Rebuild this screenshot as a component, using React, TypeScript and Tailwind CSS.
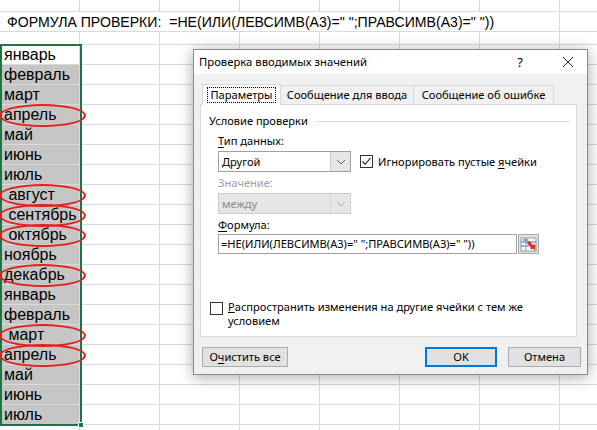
import React from "react";

const months = [
  "январь",
  "февраль",
  "март",
  "апрель ",
  "май",
  "июнь",
  "июль",
  " август",
  " сентябрь",
  " октябрь",
  "ноябрь",
  "декабрь ",
  "январь",
  "февраль",
  " март",
  "апрель ",
  "май",
  "июнь",
  "июль",
];

const circled = [3, 7, 8, 9, 11, 14, 15];

function EmptyCells({ h, from = 1 }: { h: string; from?: number }) {
  const cells = [];
  for (let i = from; i < 8; i++) {
    cells.push(
      <div key={i} className={`shrink-0 w-[80px] ${h} border-r border-b border-[#dadada]`} />
    );
  }
  return <>{cells}</>;
}

function Chevron({ color }: { color: string }) {
  return (
    <svg width="10" height="6" viewBox="0 0 10 6">
      <path d="M1 1 L5 5 L9 1" fill="none" stroke={color} strokeWidth="1" />
    </svg>
  );
}

function RangeIcon() {
  return (
    <svg width="17" height="15" viewBox="0 0 17 15">
      <rect x="1" y="1" width="15" height="13" fill="#f4f7fb" stroke="#8aa0b8" strokeWidth="1" />
      <line x1="1" y1="5" x2="16" y2="5" stroke="#4a78b0" strokeWidth="1" />
      <line x1="1" y1="9" x2="16" y2="9" stroke="#4a78b0" strokeWidth="1" />
      <line x1="6" y1="1" x2="6" y2="14" stroke="#8aa0b8" strokeWidth="1" />
      <line x1="3" y1="3" x2="8" y2="3" stroke="#3a6aa8" strokeWidth="1" />
      <path d="M8 5 L14 11 L14 7.5 M14 11 L10.5 11" fill="none" stroke="#e0301e" strokeWidth="2" />
      <path d="M8 5 L13 10" stroke="#e0301e" strokeWidth="3" />
    </svg>
  );
}

export default function App() {
  return (
    <div
      className="relative w-[597px] h-[430px] overflow-hidden bg-white text-black"
      style={{ fontFamily: '"Liberation Sans", Arial, sans-serif' }}
    >
      {/* Spreadsheet grid */}
      <div className="flex flex-col">
        <div className="flex">
          <EmptyCells h="h-[12px]" from={0} />
        </div>
        <div className="flex">
          <div className="shrink-0 w-[560px] h-[20px] border-r border-b border-[#dadada] pl-[7px] text-[14.1px] leading-[20px] whitespace-pre">
            {'ФОРМУЛА ПРОВЕРКИ:  =НЕ(ИЛИ(ЛЕВСИМВ(A3)=" ";ПРАВСИМВ(A3)=" "))'}
          </div>
          <div className="shrink-0 w-[80px] h-[20px] border-r border-b border-[#dadada]" />
        </div>
        <div className="flex">
          <EmptyCells h="h-[13px]" from={0} />
        </div>
        {months.map((m, i) => (
          <div key={i} className="flex">
            <div
              className={`shrink-0 w-[80px] h-[20px] border-r border-b border-[#dadada] pl-[4px] text-[16px] leading-[19px] whitespace-pre ${
                i === 0 ? "bg-white" : "bg-[#c6c6c6]"
              }`}
            >
              {m}
            </div>
            <EmptyCells h="h-[20px]" />
          </div>
        ))}
        <div className="flex">
          <EmptyCells h="h-[20px]" from={0} />
        </div>
      </div>

      {/* selection border */}
      <div className="absolute left-0 top-[44px] w-[82px] h-[382px] border-2 border-[#217346]" />
      <div className="absolute left-[78px] top-[422px] w-[6px] h-[6px] bg-[#217346] border border-white" />

      {/* red ellipses */}
      {circled.map((r) => (
        <div
          key={r}
          className="absolute left-[-1px] w-[87px] h-[23px] rounded-[50%] border-2 border-[#e3211c]"
          style={{ top: 45 + r * 20 + 10 - 11.5 }}
        />
      ))}

      {/* Dialog */}
      <div
        className="absolute left-[193px] top-[49px] w-[395px] h-[326px] border border-[#8a8a8a] bg-[#f0f0f0] shadow-[0_2px_14px_rgba(0,0,0,0.35)] flex flex-col text-[11.1px] text-black"
        style={{ fontFamily: '"Noto Sans", "Open Sans", sans-serif' }}
      >
        <div className="h-[24px] bg-white flex items-center pl-[5px] shrink-0">
          <span className="leading-[16px] text-[11.3px]">Проверка вводимых значений</span>
          <span className="ml-auto mr-[39px] text-[13px] leading-[16px]">?</span>
          <svg width="12" height="12" viewBox="0 0 12 12" className="mr-[13px]">
            <path d="M1 1 L11 11 M11 1 L1 11" stroke="#222" strokeWidth="1" />
          </svg>
        </div>

        <div className="flex flex-col px-[6px] pt-[9px]">
          {/* tabs */}
          <div className="flex items-end h-[21px] pl-[2px]">
            <div className="relative z-10 h-[21px] w-[79px] -mb-px bg-white border border-b-0 border-[#d9d9d9] flex items-center justify-center">
              <span className="border border-dotted border-black px-[2px] leading-[14px]">Параметры</span>
            </div>
            <div className="h-[19px] w-[133px] border border-l-0 border-b-0 border-[#d9d9d9] flex items-center justify-center leading-[16px]">
              Сообщение для ввода
            </div>
            <div className="h-[19px] w-[140px] border border-l-0 border-b-0 border-[#d9d9d9] flex items-center justify-center leading-[16px]">
              Сообщение об ошибке
            </div>
          </div>

          {/* panel */}
          <div className="h-[233px] w-[377px] bg-white border border-[#d9d9d9] flex flex-col pr-[6px]">
            <div className="flex items-center mt-[8px] pl-[8px] h-[16px]">
              <span className="leading-[16px]">Условие проверки</span>
              <div className="flex-1 h-px bg-[#dcdcdc] ml-[7px]" />
            </div>
            <div className="pl-[17px] flex flex-col">
              <div className="mt-[4px] leading-[16px]">
                <span className="underline underline-offset-2">Т</span>ип данных:
              </div>
              <div className="flex items-center mt-[2px]">
                <div className="w-[133px] h-[21px] border border-[#a0a0a0] flex">
                  <div className="flex-1 flex items-center pl-[3px] leading-[16px]">Другой</div>
                  <div className="w-[20px] bg-[#e6e6e6] border-l border-[#c8c8c8] flex items-center justify-center">
                    <Chevron color="#606060" />
                  </div>
                </div>
                <div className="ml-[9px] w-[13px] h-[13px] border border-[#333] bg-white flex items-center justify-center">
                  <svg width="11" height="11" viewBox="0 0 11 11">
                    <path d="M1.5 5.5 L4.2 8.3 L9.5 2" fill="none" stroke="#111" strokeWidth="1.1" />
                  </svg>
                </div>
                <span className="ml-[5px] leading-[16px]">
                  Игнорировать пустые <span className="underline underline-offset-2">я</span>чейки
                </span>
              </div>
              <div className="mt-[3px] leading-[16px] text-[#a0a0a0]">Значение:</div>
              <div className="mt-[2px] w-[133px] h-[21px] border border-[#cccccc] bg-[#e6e6e6] flex">
                <div className="flex-1 flex items-center pl-[3px] leading-[16px] text-[#8d8d8d]">между</div>
                <div className="w-[20px] border-l border-[#d8d8d8] flex items-center justify-center">
                  <Chevron color="#b0b0b0" />
                </div>
              </div>
              <div className="mt-[3px] leading-[16px]">
                <span className="underline underline-offset-2">Ф</span>ормула:
              </div>
              <div className="mt-[1px] flex items-center">
                <div className="w-[299px] h-[20px] border border-[#a0a0a0] flex items-center pl-[2px] whitespace-pre leading-[16px]">
                  {'=НЕ(ИЛИ(ЛЕВСИМВ(A3)=" ";ПРАВСИМВ(A3)=" "))'}
                </div>
                <div className="ml-[1px] w-[21px] h-[20px] bg-[#e1e1e1] border border-[#adadad] flex items-center justify-center">
                  <RangeIcon />
                </div>
              </div>
            </div>
            <div className="mt-[46px] pl-[9px] flex items-start">
              <div className="mt-[2px] w-[13px] h-[13px] border border-[#333] bg-white shrink-0" />
              <div className="ml-[5px] flex flex-col">
                <div className="h-[14px] leading-[14px] whitespace-nowrap">
                  <span className="inline-block leading-[13px] underline underline-offset-1">Р</span>
                  <span className="inline-block leading-[13px]">аспространить изменения на другие ячейки с тем же</span>
                </div>
                <div className="h-[13px] leading-[13px]">
                  <span className="inline-block leading-[13px]">условием</span>
                </div>
              </div>
            </div>
          </div>

          {/* buttons */}
          <div className="flex items-center mt-[10px] pl-[2px]">
            <div className="w-[86px] h-[20px] bg-[#e1e1e1] border border-[#adadad] flex items-center justify-center leading-[16px]">
              О<span className="underline underline-offset-2">ч</span>истить все
            </div>
            <div className="ml-auto w-[72px] h-[20px] bg-[#e1e1e1] border-2 border-[#0078d7] flex items-center justify-center leading-[16px]">
              OK
            </div>
            <div className="ml-[11px] w-[73px] h-[20px] bg-[#e1e1e1] border border-[#adadad] flex items-center justify-center leading-[16px]">
              Отмена
            </div>
          </div>
        </div>
      </div>
    </div>
  );
}
